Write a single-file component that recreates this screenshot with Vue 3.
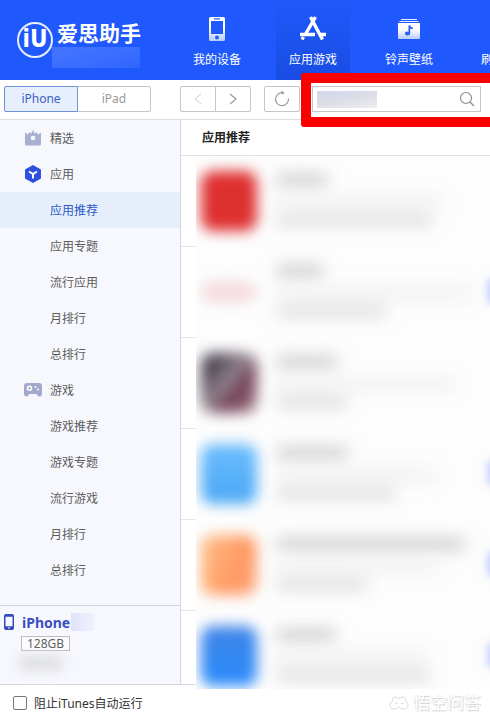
<script setup>
import { ref } from 'vue'

const tabs = [
  { id: 'device', label: '我的设备' },
  { id: 'apps', label: '应用游戏' },
  { id: 'media', label: '铃声壁纸' },
  { id: 'flash', label: '刷机越狱' },
]

const menu = [
  { id: 'featured', label: '精选', icon: 'crown' },
  { id: 'apps', label: '应用', icon: 'cube' },
  { id: 'apps-rec', label: '应用推荐' },
  { id: 'apps-topic', label: '应用专题' },
  { id: 'apps-hot', label: '流行应用' },
  { id: 'apps-month', label: '月排行' },
  { id: 'apps-total', label: '总排行' },
  { id: 'games', label: '游戏', icon: 'pad' },
  { id: 'games-rec', label: '游戏推荐' },
  { id: 'games-topic', label: '游戏专题' },
  { id: 'games-hot', label: '流行游戏' },
  { id: 'games-month', label: '月排行' },
  { id: 'games-total', label: '总排行' },
]

// widths of the obscured text lines, per app
const apps = [
  { tone: 'red', title: 50, meta: 164, desc: 154 },
  { tone: 'pale', title: 46, meta: 196, desc: 108, action: true },
  { tone: 'dark', title: 60, meta: 176, desc: 70 },
  { tone: 'sky', title: 70, meta: 160, desc: 118, action: true },
  { tone: 'orange', title: 188, meta: 160, desc: 90, action: true },
  { tone: 'blue', title: 58, meta: 150, desc: 152, action: true },
]

const activeTab = ref('apps')
const platform = ref('iPhone')
const activeMenu = ref('apps-rec')
const keyword = ref('')
const blockItunes = ref(false)
</script>

<template>
  <div class="window">
    <header class="header">
      <div class="brand">
        <span class="brand-mark">iU</span>
        <div class="brand-text">
          <span class="brand-name">爱思助手</span>
          <span class="brand-sub"></span>
        </div>
      </div>
      <nav class="tabs">
        <button
          v-for="tab in tabs"
          :key="tab.id"
          class="tab"
          :class="{ 'is-active': tab.id === activeTab }"
          @click="activeTab = tab.id"
        >
          <svg v-if="tab.id === 'device'" width="28" height="28" viewBox="0 0 28 28">
            <defs>
              <linearGradient id="fade" x1="0" y1="0" x2="0" y2="1">
                <stop offset="0.4" stop-color="#fff" />
                <stop offset="1" stop-color="#b8caff" />
              </linearGradient>
            </defs>
            <path fill="url(#fade)" fill-rule="evenodd" d="M7.500 2h13a1.500 1.500 0 0 1 1.500 1.500v21a1.500 1.500 0 0 1-1.500 1.500h-13a1.500 1.500 0 0 1-1.500-1.500v-21a1.500 1.500 0 0 1 1.500-1.500zM8 6v13h12V6zM11 3.300v1.200h6V3.300z" />
            <circle cx="14" cy="22.500" r="2" fill="#2c5ff0" />
          </svg>
          <svg v-else-if="tab.id === 'apps'" width="28" height="28" viewBox="0 0 28 28" fill="none" stroke="#fff" stroke-width="3.400">
            <path d="M11.500 2l12 22.500M16.500 2L6 20M1 19.500h15M20 19.500h7M4.500 22l-1.500 2.500" />
          </svg>
          <svg v-else-if="tab.id === 'media'" width="28" height="28" viewBox="0 0 28 28">
            <path d="M6 4.500h16M4.500 6.500h19" stroke="#e6edff" stroke-width="1.200" />
            <path d="M3 8h22v15a1 1 0 0 1-1 1H4a1 1 0 0 1-1-1z" fill="url(#fade)" />
            <ellipse cx="12.500" cy="18.500" rx="2.600" ry="2.100" fill="#2c5ff0" />
            <path d="M14.300 18.500v-8q.5 2.500 3.500 3" fill="none" stroke="#2c5ff0" stroke-width="1.700" />
          </svg>
          <svg v-else width="28" height="28" viewBox="0 0 28 28" fill="none" stroke="#fff" stroke-width="2">
            <path d="M14 4v13M8 12l6 6 6-6M5 23h18" />
          </svg>
          <span>{{ tab.label }}</span>
        </button>
      </nav>
    </header>

    <div class="toolbar">
      <div class="group segment">
        <button
          v-for="name in ['iPhone', 'iPad']"
          :key="name"
          :class="{ 'is-active': name === platform }"
          @click="platform = name"
        >{{ name }}</button>
      </div>
      <div class="group history">
        <button aria-label="后退" disabled>
          <svg width="12" height="14" viewBox="0 0 12 14" fill="none" stroke="#ccc"><path d="M9 2L3 7l6 5" /></svg>
        </button>
        <button aria-label="前进">
          <svg width="12" height="14" viewBox="0 0 12 14" fill="none" stroke="#999" stroke-width="1.200"><path d="M3 2l6 5-6 5" /></svg>
        </button>
      </div>
      <div class="group reload">
        <button aria-label="刷新">
          <svg width="18" height="18" viewBox="0 0 18 18" fill="none" stroke="#999" stroke-width="1.200">
            <path d="M15.500 8.500A6.500 6.500 0 1 1 9.500 2.700" />
            <path d="M8.500 .5l3 2.300-2.500 2.200z" fill="#999" stroke="none" />
          </svg>
        </button>
      </div>
      <div class="search">
        <input v-model="keyword" type="text" aria-label="搜索">
        <span class="search-smudge"></span>
        <button aria-label="搜索">
          <svg width="16" height="16" viewBox="0 0 16 16" fill="none" stroke="#8c8c8c" stroke-width="1.200">
            <circle cx="7" cy="7" r="5.500" />
            <path d="M11 11l4 4" />
          </svg>
        </button>
        <span class="search-frame"></span>
      </div>
    </div>

    <div class="body">
      <aside class="sidebar">
        <nav class="menu">
          <button
            v-for="item in menu"
            :key="item.id"
            class="menu-item"
            :class="{ 'is-active': item.id === activeMenu }"
            @click="activeMenu = item.id"
          >
            <span class="menu-icon">
              <svg v-if="item.icon === 'crown'" width="18" height="18" viewBox="0 0 18 18">
                <path fill="#a9afd0" fill-rule="evenodd" d="M1 3.500l3 2L5.500 3l2 1.500L9 .5l1.500 4 2-1.500L14 5.500l3-2V15a1.500 1.500 0 0 1-1.500 1.500h-13A1.500 1.500 0 0 1 1 15zM9 6.700A2.300 2.300 0 1 0 9 11.300 2.300 2.300 0 1 0 9 6.700z" />
              </svg>
              <svg v-else-if="item.icon === 'cube'" width="18" height="18" viewBox="0 0 18 18">
                <path d="M9 .8l7.200 4v8.400L9 17.200l-7.200-4V4.800z" fill="#2f4fe0" stroke="#2f4fe0" stroke-width="1.500" stroke-linejoin="round" />
                <path d="M5 6.500L9 9l4-2.500M9 9v4.500" fill="none" stroke="#fff" stroke-width="2" />
              </svg>
              <svg v-else-if="item.icon === 'pad'" width="18" height="18" viewBox="0 0 18 18">
                <path d="M3 2h12q3 0 3 3v7.500q0 3-2.500 3-2 0-2.700-2.500H5.200Q4.500 15.500 2.500 15.500q-2.500 0-2.500-3V5q0-3 3-3z" fill="#a3a9cc" />
                <circle cx="5.500" cy="7.300" r="2" fill="none" stroke="#fff" stroke-width="1.500" />
                <circle cx="11.500" cy="6" r="1" fill="#fff" />
                <circle cx="14" cy="8.500" r="1" fill="#fff" />
              </svg>
            </span>
            {{ item.label }}
          </button>
        </nav>
        <section class="device">
          <div class="device-name">
            <svg width="12" height="18" viewBox="0 0 12 18">
              <path fill="#3549bd" fill-rule="evenodd" d="M3 1h6a2 2 0 0 1 2 2v12a2 2 0 0 1-2 2H3a2 2 0 0 1-2-2V3a2 2 0 0 1 2-2zm-.5 2.800v9.400h7V3.800z" />
              <path d="M5 15h2" stroke="#fff" />
            </svg>
            <strong>iPhone</strong>
            <span class="device-smudge"></span>
          </div>
          <span class="capacity">128GB</span>
          <span class="device-info"></span>
        </section>
      </aside>

      <main class="main">
        <h1 class="title">应用推荐</h1>
        <ul class="apps">
          <li v-for="app in apps" :key="app.tone" class="app">
            <div class="app-inner">
              <span class="app-icon" :class="app.tone"></span>
              <div class="app-lines">
                <span class="line line-title" :style="{ width: app.title + 'px' }"></span>
                <span class="line line-meta" :style="{ width: app.meta + 'px' }"></span>
                <span class="line line-desc" :style="{ width: app.desc + 'px' }"></span>
              </div>
              <span v-if="app.action" class="app-action"></span>
            </div>
          </li>
        </ul>
      </main>
    </div>

    <footer class="footer">
      <label class="check">
        <input v-model="blockItunes" type="checkbox">
        阻止iTunes自动运行
      </label>
      <span class="watermark">
        <svg width="20" height="16" viewBox="0 0 20 16" fill="#fff" stroke="#dcdcdc">
          <path d="M4 6Q2 2 6 2q2 0 4 2 2-2 4-2 4 0 2 4 3 1 3 4 0 4-5 4-2 0-4-2-2 2-4 2-5 0-5-4 0-3 3-4z" />
          <path d="M6 9q1-2 3 0M12 9q1-2 3 0" fill="none" />
        </svg>
        悟空问答
      </span>
    </footer>
  </div>
</template>

<style>
body {
  margin: 0;
}
</style>

<style scoped>
.window {
  display: flex;
  flex-direction: column;
  height: 100vh;
  overflow: hidden;
  background: #fff;
  color: #5c5c5c;
  font-family: "Noto Sans", "Noto Sans CJK SC", sans-serif;
  font-size: 12px;
}

button {
  padding: 0;
  border: 0;
  background: none;
  color: inherit;
  font: inherit;
  cursor: pointer;
}

svg {
  display: block;
}

.header {
  display: flex;
  flex: none;
  height: 80px;
  background: #1f59fd;
  color: #fff;
}

.brand {
  display: flex;
  flex: none;
  align-items: center;
  gap: 4px;
  box-sizing: border-box;
  width: 180px;
  padding-left: 17px;
}

.brand-mark {
  box-sizing: border-box;
  width: 36px;
  height: 36px;
  border: 2px solid #e8eeff;
  border-radius: 50%;
  font: bold 24px/30px "DejaVu Sans Condensed", sans-serif;
  text-align: center;
}

.brand-text {
  display: flex;
  flex-direction: column;
  gap: 2px;
  padding-top: 8px;
}

.brand-name {
  font-size: 21px;
  font-weight: bold;
  line-height: 24px;
}

.brand-sub {
  width: 88px;
  height: 21px;
  margin-left: -5px;
  background: linear-gradient(165deg, #4475ff, #396dff 60%, #3065fd);
}

.tabs {
  display: flex;
  gap: 22px;
}

.tab {
  display: flex;
  flex: none;
  flex-direction: column;
  align-items: center;
  gap: 8px;
  width: 74px;
  padding-top: 15px;
  line-height: 18px;
}

.tab.is-active {
  background: linear-gradient(#1f59fb, #194de3);
}

.toolbar {
  display: flex;
  flex: none;
  align-items: center;
  box-sizing: border-box;
  height: 40px;
  padding: 0 9px 2px 4px;
  border-bottom: 1px solid #dcdce2;
}

.group {
  display: flex;
  flex: none;
  box-sizing: border-box;
  height: 26px;
  border: 1px solid #c6c6ca;
  border-radius: 2px;
}

.group button {
  display: flex;
  flex: 1;
  align-items: center;
  justify-content: center;
}

.group button + button {
  border-left: 1px solid #c6c6ca;
}

.segment {
  width: 147px;
  margin-right: 29px;
  color: #999;
}

.segment .is-active {
  margin: -1px 0 -1px -1px;
  border: 1px solid #6e93d8;
  border-radius: 2px 0 0 2px;
  background: #e8effc;
  color: #3a62c4;
}

.segment .is-active + button {
  border-left: 0;
}

.history {
  width: 71px;
  margin-right: 13px;
}

.reload {
  width: 36px;
  margin-right: 12px;
}

.search {
  position: relative;
  display: flex;
  flex: 1;
  align-items: center;
  box-sizing: border-box;
  min-width: 0;
  height: 26px;
  padding-right: 5px;
  border: 1px solid #c6c6ca;
}

.search input {
  flex: 1;
  min-width: 0;
  height: 20px;
  padding: 0 5px;
  border: 0;
  outline: 0;
  background: none;
  font: inherit;
}

.search-smudge {
  position: absolute;
  top: 4px;
  left: 4px;
  width: 60px;
  height: 17px;
  background: linear-gradient(170deg, #d0d7ef, #dcdee6 50%, #eeeef0);
}

.search-frame {
  position: absolute;
  top: -14px;
  right: -24px;
  bottom: -16px;
  left: -12px;
  border: 10px solid #fb0000;
  border-radius: 3px;
  pointer-events: none;
}

.body {
  display: flex;
  flex: 1;
  min-height: 0;
}

.sidebar {
  display: flex;
  flex: none;
  flex-direction: column;
  justify-content: space-between;
  width: 180px;
  border-right: 1px solid #d6d6de;
  background: #f7f8fd;
}

.menu {
  display: flex;
  flex-direction: column;
}

.menu-item {
  display: flex;
  align-items: center;
  gap: 8px;
  height: 36px;
  padding-left: 24px;
}

.menu-item.is-active {
  background: #e7eefb;
  color: #2a5bc8;
}

.menu-icon {
  width: 18px;
}

.device {
  display: flex;
  flex-direction: column;
  align-items: flex-start;
  box-sizing: border-box;
  height: 79px;
  padding: 6px 3px;
  border-top: 1px solid #d0d3e0;
}

.device-name {
  display: flex;
  align-items: center;
  gap: 7px;
  height: 20px;
  color: #3b4fc2;
  font-size: 14px;
}

.device-smudge {
  width: 24px;
  height: 18px;
  margin-left: -6px;
  background: linear-gradient(90deg, #dfe3f8, #f1f3fd);
}

.capacity {
  margin: 4px 0 0 18px;
  padding: 0 5px;
  border: 1px solid #bcbcc2;
  background: #fcfcfe;
  line-height: 13px;
}

.device-info {
  width: 44px;
  height: 16px;
  margin: 4px 0 0 16px;
  background: #dfe0e5;
  filter: blur(6px);
}

/* the list runs a little over the footer's top edge */
.main {
  position: relative;
  z-index: 1;
  flex: 1;
  min-width: 0;
  margin-bottom: -5px;
  overflow: hidden;
}

.title {
  height: 35px;
  margin: 0;
  padding-left: 21px;
  border-bottom: 1px solid #e2e2e6;
  color: #222;
  font-size: 12px;
  line-height: 35px;
}

.apps {
  margin: 0;
  padding: 0;
  list-style: none;
}

.app {
  height: 90px;
  padding-left: 15px;
  border-bottom: 1px solid #e6e6ea;
}

.app-inner {
  position: relative;
  display: flex;
  gap: 20px;
  height: 91px;
  overflow: hidden;
  background: #fdfdfd;
}

.app-icon {
  flex: none;
  width: 56px;
  height: 60px;
  margin: 15px 0 0 5px;
  border-radius: 12px;
  filter: blur(7px);
}

.app-icon.red {
  background: #df3030;
}

.app-icon.pale {
  height: 20px;
  margin-top: 35px;
  background: #f5dadd;
}

.app-icon.dark {
  background: linear-gradient(130deg, #4c4452 20%, #94868f 48%, #713c54 65%, #a8858f);
}

.app-icon.sky {
  background: linear-gradient(#6bbcfd, #4aa8f5);
}

.app-icon.orange {
  background: linear-gradient(110deg, #ffc08a, #ff9861 65%, #fbaa82);
}

.app-icon.blue {
  background: linear-gradient(#3f84e8, #2a8cfb);
}

.app-lines {
  display: flex;
  flex-direction: column;
  padding-top: 18px;
}

.line {
  height: 12px;
  filter: blur(8px);
}

.line-title {
  background: #cdcdcd;
}

.line-meta {
  margin-top: 10px;
  background: #f0f0f0;
}

.line-desc {
  margin-top: 6px;
  background: #dddede;
}

.app-action {
  position: absolute;
  top: 32px;
  right: -6px;
  width: 8px;
  height: 24px;
  background: #b9c8ff;
  filter: blur(4px);
}

.footer {
  display: flex;
  flex: none;
  align-items: center;
  justify-content: space-between;
  box-sizing: border-box;
  height: 36px;
  padding: 0 9px 0 13px;
  border-top: 1px solid #d6d6de;
  color: #333;
}

.check {
  display: flex;
  align-items: center;
  gap: 7px;
}

.check input {
  appearance: none;
  width: 14px;
  height: 14px;
  margin: 0;
  border: 1px solid #777;
  border-radius: 2px;
  background: #fff;
}

.check input:checked {
  background: #2f4fe0;
}

.watermark {
  display: flex;
  align-items: center;
  gap: 4px;
  color: #fff;
  font-size: 17px;
  line-height: 20px;
  text-shadow: 1px 1px 1px #d0d0d0, -1px 0 1px #ececec;
}
</style>
